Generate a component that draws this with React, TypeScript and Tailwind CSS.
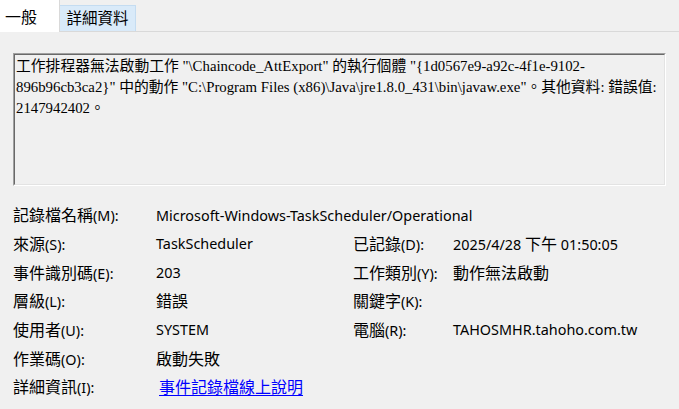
import React from "react";

const sans = '"Noto Sans", "Noto Sans CJK TC", sans-serif';
const serif = '"Liberation Serif", "Noto Sans CJK TC", serif';

function Mixed({ text }: { text: string }) {
  const parts = text.split(/([\u3000-\u9fff\uff00-\uffef]+)/);
  return (
    <>
      {parts.map((p, i) =>
        /[\u3000-\u9fff\uff00-\uffef]/.test(p) ? (
          <span key={i} className="text-[16px]">
            {p}
          </span>
        ) : (
          <span key={i}>{p}</span>
        )
      )}
    </>
  );
}

function Row({ label, value, label2, value2, span }: { label: string; value?: React.ReactNode; label2?: string; value2?: string; span?: boolean }) {
  const v = typeof value === "string" ? <Mixed text={value} /> : value;
  return (
    <div className="flex h-[28.67px] items-center">
      <div className="w-[143px] shrink-0 whitespace-nowrap">
        <Mixed text={label} />
      </div>
      {span ? (
        <div className="whitespace-nowrap">{v}</div>
      ) : (
        <>
          <div className="w-[197px] shrink-0 whitespace-nowrap">{v}</div>
          <div className="w-[100px] shrink-0 whitespace-nowrap">{label2 ? <Mixed text={label2} /> : null}</div>
          <div className="whitespace-nowrap">{value2 ? <Mixed text={value2} /> : null}</div>
        </>
      )}
    </div>
  );
}

export default function App() {
  return (
    <div className="w-[679px] h-[409px] bg-[#f0f0f0] overflow-hidden text-[#000]" style={{ fontFamily: sans }}>
      {/* tab strip */}
      <div className="flex h-[32px] items-end border-b border-[#d9d9d9] bg-[#f0f0f0]">
        <div className="h-[32px] w-[60px] bg-white border-r border-[#d9d9d9] -mb-px flex items-center pl-[5px] pt-[2px] text-[16px]">
          一般
        </div>
        <div className="h-[26px] w-[76px] bg-[#d9eaf9] border border-l-0 border-b-0 border-[#c4dcf1] flex items-center justify-center pt-[1px] text-[15.5px]">
          詳細資料
        </div>
      </div>

      {/* description box */}
      <div className="mx-[13px] mt-[21px] h-[133px] border-t border-l border-[#a0a0a0] border-r border-b border-r-white border-b-white">
        <div className="h-full border-t border-l border-[#696969] border-r border-b border-r-[#e3e3e3] border-b-[#e3e3e3] bg-[#f0f0f0] pl-[1px] pt-[1px] text-[14.8px] leading-[21px] whitespace-nowrap" style={{ fontFamily: serif }}>
          工作排程器無法啟動工作 "\Chaincode_AttExport" 的執行個體 "{"{"}1d0567e9-a92c-4f1e-9102-
          <br />
          896b96cb3ca2{"}"}" 中的動作 "C:\Program Files (x86)\Java\jre1.8.0_431\bin\javaw.exe"。其他資料: 錯誤值:
          <br />
          2147942402。
        </div>
      </div>

      {/* properties */}
      <div className="pl-[13px] mt-[15px] text-[14.4px]">
        <Row label="記錄檔名稱(M):" value="Microsoft-Windows-TaskScheduler/Operational" span />
        <Row label="來源(S):" value="TaskScheduler" label2="已記錄(D):" value2="2025/4/28 下午 01:50:05" />
        <Row label="事件識別碼(E):" value="203" label2="工作類別(Y):" value2="動作無法啟動" />
        <Row label="層級(L):" value="錯誤" label2="關鍵字(K):" value2="" />
        <Row label="使用者(U):" value="SYSTEM" label2="電腦(R):" value2="TAHOSMHR.tahoho.com.tw" />
        <Row label="作業碼(O):" value="啟動失敗" />
        <Row
          label="詳細資訊(I):"
          value={<span className="ml-[3px] text-[16px] text-[#0000ff] underline underline-offset-2">事件記錄檔線上說明</span>}
          span
        />
      </div>
    </div>
  );
}
